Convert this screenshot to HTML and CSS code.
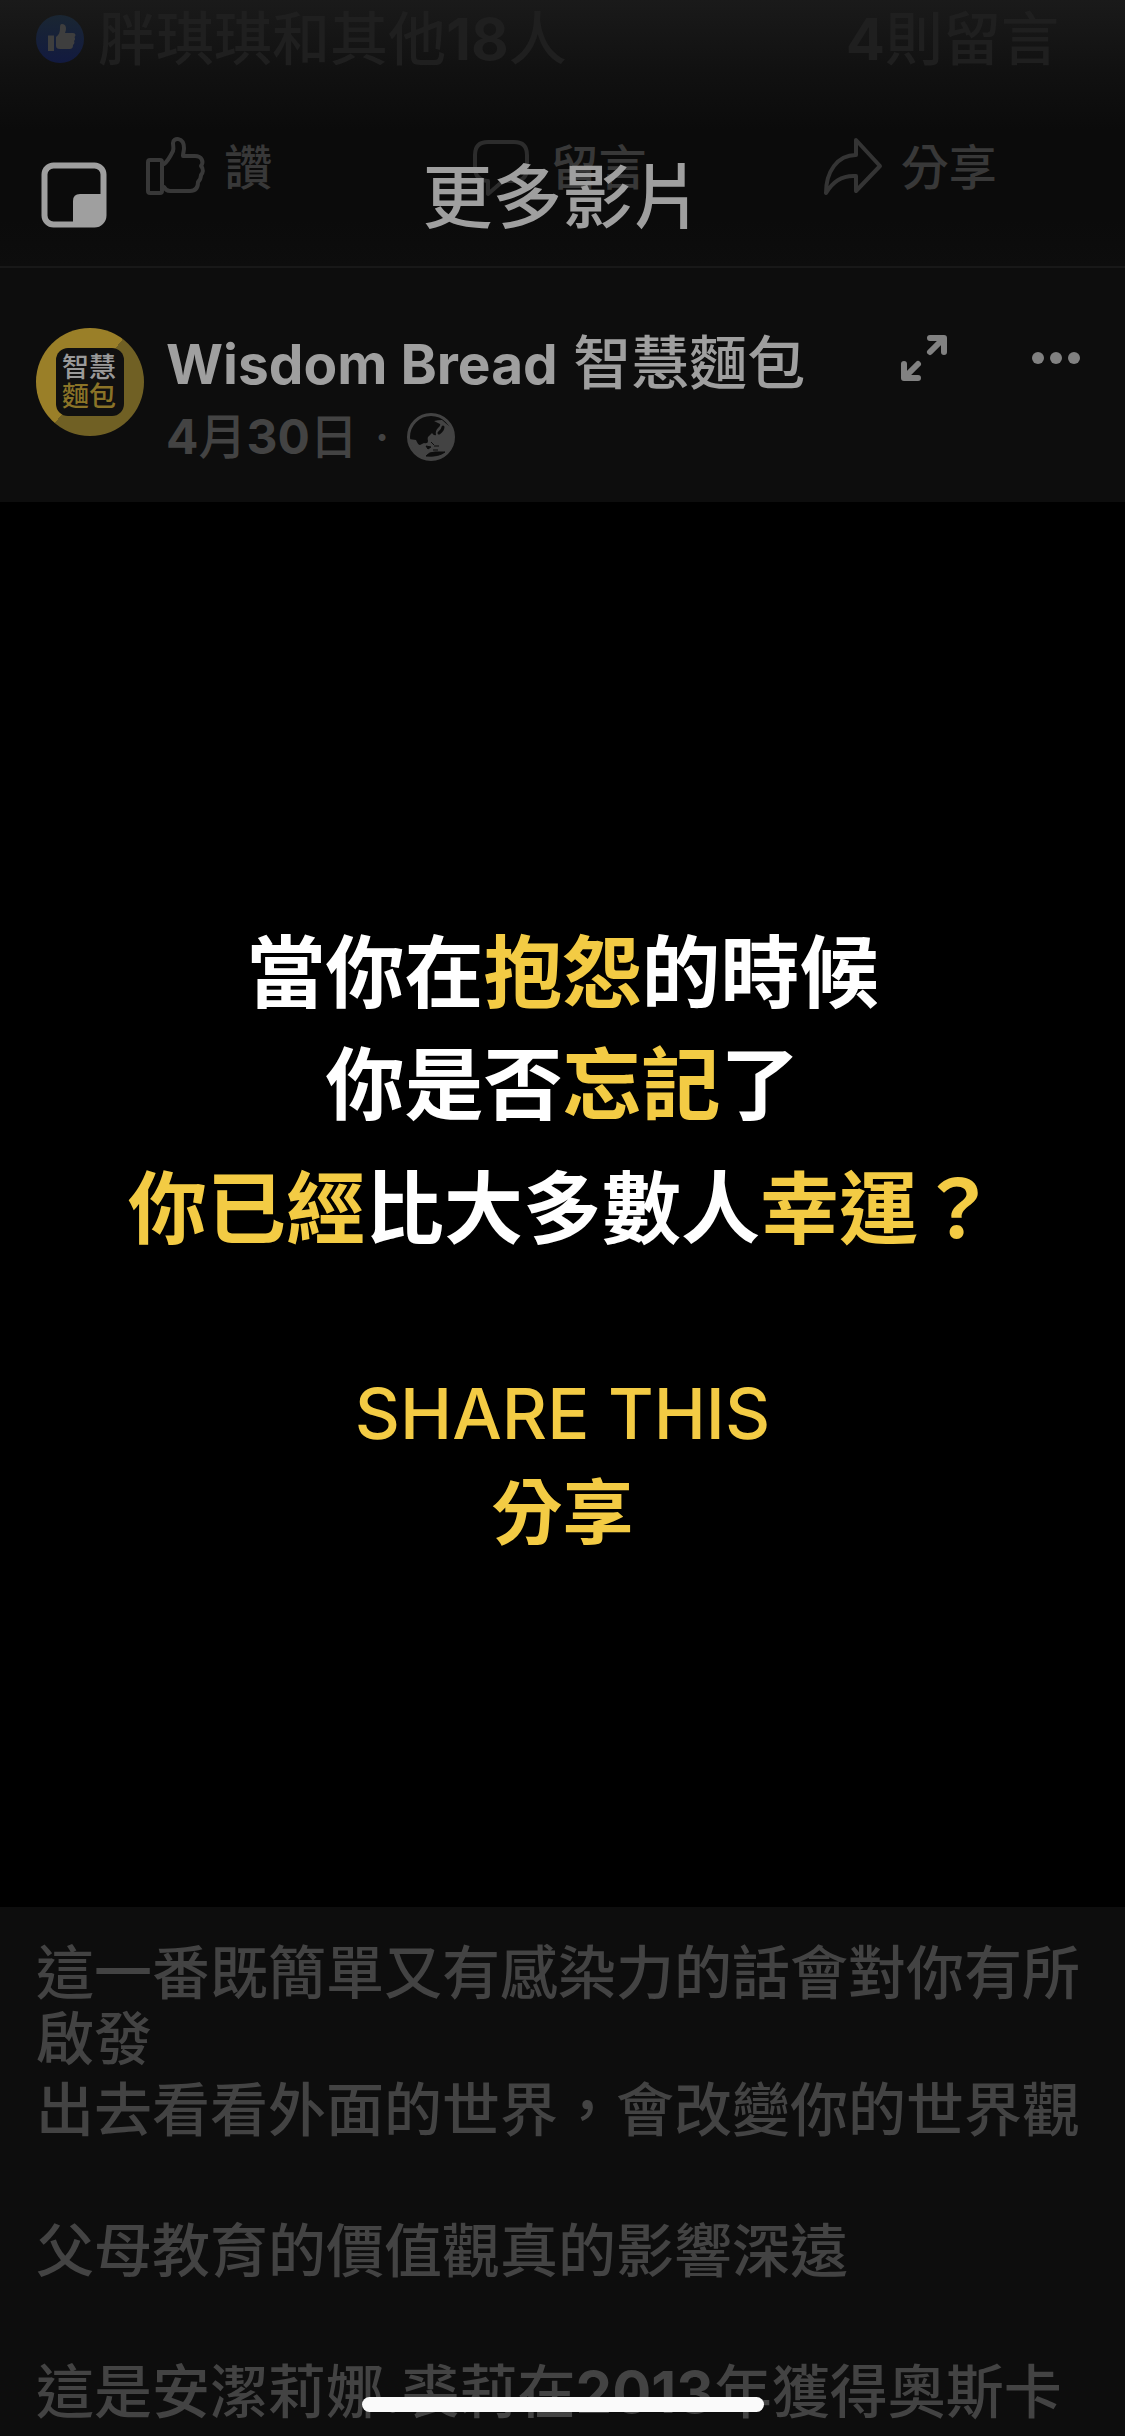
FILE: index.html
```html
<!DOCTYPE html>
<html lang="zh-Hant">
<head>
<meta charset="utf-8">
<meta name="viewport" content="width=device-width, initial-scale=1">
<title>更多影片</title>
<link rel="stylesheet" href="styles.css">
</head>
<body>
<header class="topbar">
  <button class="icon-button pip" aria-label="子母畫面">
    <svg width="66" height="66" viewBox="0 0 66 66" fill="none">
      <rect x="3.5" y="3.5" width="59" height="59" rx="9" stroke="#9f9f9f" stroke-width="6"/>
      <path d="M32 62V39q0-7 7-7h24v22q0 9-9 9z" fill="#9f9f9f"/>
    </svg>
  </button>
  <h1 class="topbar-title">更多影片</h1>
</header>

<main class="feed">
  <section class="previous-post">
    <div class="reactions">
      <svg class="like-badge" width="48" height="48" viewBox="0 0 48 48">
        <defs>
          <linearGradient id="like" x1="0" y1="0" x2="0" y2="1">
            <stop offset="0" stop-color="#1a2632"/>
            <stop offset="1" stop-color="#121a40"/>
          </linearGradient>
        </defs>
        <circle cx="24" cy="24" r="24" fill="url(#like)"/>
        <path d="M12 20.500h6V36h-6zM20 22c3-2 4-5 4-9 0-2 0-4 2-4 4 0 5 4 3 9h8c3 0 3 3 1.500 4 1 2 .5 3-.5 4 1 2 0 3-1 4 0 3-1 4-4 4H24q-4 0-4-3z" fill="#3e3e3e"/>
      </svg>
      <span class="reaction-names">胖琪琪和其他<b>18</b>人</span>
      <a class="comment-count" href="#comments"><b>4</b>則留言</a>
    </div>
    <div class="actions">
      <button class="action">
        <svg width="60" height="64" viewBox="0 0 60 64" fill="none" stroke="#383838" stroke-width="4" stroke-linejoin="round" stroke-linecap="round">
          <rect x="2" y="24" width="14" height="33" rx="2"/>
          <path d="M18 28c3-2 7-9 9-13 1-3 0-5 0-8 0-6 11-6 11 5 0 3-1 5-1 8h12c7 0 9 6 6 10 3 3 2 7 0 9 0 4-1 5-3 7 0 6-3 9-8 9H24q-4 0-6-4"/>
        </svg>
        <span>讚</span>
      </button>
      <button class="action">
        <svg width="60" height="64" viewBox="0 0 60 64" fill="none" stroke="#2c2c2c" stroke-width="4" stroke-linejoin="round">
          <path d="M16 6h26q13 0 13 13v13q0 13-13 13H31L16 58V45Q3 44 3 32V19Q3 6 16 6z"/>
        </svg>
        <span>留言</span>
      </button>
      <button class="action">
        <svg width="60" height="64" viewBox="0 0 60 64" fill="none" stroke="#343434" stroke-width="4" stroke-linejoin="round">
          <path d="M33 4l24 26-24 25V40C20 39 10 45 3 57 3 36 14 19 33 19z"/>
        </svg>
        <span>分享</span>
      </button>
    </div>
  </section>

  <article class="post">
    <header class="post-header">
      <div class="avatar"><span class="avatar-mark">智慧<i>麵包</i></span></div>
      <div class="byline">
        <a class="author" href="#author"><b>Wisdom Bread</b> 智慧麵包</a>
        <div class="meta">
          <time datetime="04-30"><b>4</b>月<b>30</b>日</time>
          <span>·</span>
          <svg width="50" height="50" viewBox="0 0 50 50" aria-label="公開">
            <circle cx="25" cy="25" r="22.500" fill="none" stroke="#434343" stroke-width="3"/>
            <path d="M3 27l7 1q2 5 4 5l4-2q4 1 4-2-1-4 1-5l3-3q2 3 4 2-1-4 2-7 3-3 2-4l-6-3q4-1 8-1l8 7q5 8 4 13-2 13-13 18-12 4-21-2Q5 38 3 27z" fill="#434343"/>
            <path d="M37 15q0 3-4 6" fill="none" stroke="#0d0d0d" stroke-width="3" stroke-linecap="round"/>
            <path d="M20 44q3-4 9-4h10q-6 5-19 4zM20 34l5 1-3 2zM28 34h5M27 38h5M25 30l3 3" fill="#0d0d0d" stroke="#0d0d0d" stroke-width="1"/>
          </svg>
        </div>
      </div>
      <div class="post-tools">
        <button class="icon-button" aria-label="全螢幕">
          <svg width="48" height="48" viewBox="0 0 48 48" fill="none" stroke="#818181" stroke-width="6" stroke-linecap="round" stroke-linejoin="round">
            <path d="M30 4h14v14M43 5L30 18M4 30v14h14M5 43l13-13"/>
          </svg>
        </button>
        <button class="icon-button" aria-label="更多選項">
          <svg width="48" height="48" viewBox="0 0 48 48" fill="#818181">
            <circle cx="6" cy="24" r="6"/><circle cx="24" cy="24" r="6"/><circle cx="42" cy="24" r="6"/>
          </svg>
        </button>
      </div>
    </header>

    <div class="video">
      <p class="line">當你在<em>抱怨</em>的時候</p>
      <p class="line">你是否<em>忘記</em>了</p>
      <p class="line line-last"><em>你已經</em>比大多數人<em>幸運？</em></p>
      <p class="share-en">SHARE THIS</p>
      <p class="share-zh">分享</p>
    </div>

    <div class="caption">
      <p>這一番既簡單又有感染力的話會對你有所啟發</p>
      <p>出去看看外面的世界，會改變你的世界觀</p>
      <p class="stanza">父母教育的價值觀真的影響深遠</p>
      <p class="stanza">這是安潔莉娜.裘莉在<b>2013</b>年獲得奧斯卡</p>
    </div>
  </article>
</main>
<div class="home-indicator"></div>
</body>
</html>
```
FILE: styles.css
```css
* {
  box-sizing: border-box;
}

body {
  margin: 0;
  min-height: 100vh;
  background: #0d0d0d;
  color: #9f9f9f;
  font-family: Inter, "Noto Sans CJK TC", sans-serif;
  font-weight: 500;
  overflow-x: hidden;
}

h1,
p {
  margin: 0;
}

/* Latin letters and digits sit a step heavier than the Chinese text */
b {
  font-weight: 700;
}

a {
  color: inherit;
  text-decoration: none;
}

svg {
  display: block;
  flex: none;
}

button {
  padding: 0;
  border: 0;
  background: none;
  color: inherit;
  font: inherit;
}

/* Title bar floating over the feed */
.topbar {
  position: absolute;
  top: 150px;
  left: 0;
  right: 0;
  z-index: 2;
  display: grid;
  grid-template-columns: 66px 1fr 66px;
  align-items: center;
  padding: 0 41px;
}

.topbar-title {
  padding-top: 6px;
  text-align: center;
  font-size: 70px;
  line-height: 84px;
  font-weight: 500;
}

/* Tail of the post above */
.previous-post {
  height: 268px;
  border-bottom: 2px solid #181818;
  background: linear-gradient(#1a1a1a, #111 70px, #0b0b0b 130px, #0b0b0b 220px, #0d0d0d);
}

.reactions {
  display: flex;
  align-items: center;
  gap: 14px;
  height: 78px;
  padding: 0 66px 0 36px;
  color: #1f1f1f;
  font-size: 58px;
  line-height: 78px;
}

.comment-count {
  margin-left: auto;
}

.actions {
  display: grid;
  grid-template-columns: repeat(3, 1fr);
  margin-top: 52px;
  padding: 0 40px 0 34px;
  color: #383838;
  font-size: 48px;
  line-height: 76px;
}

.action {
  display: flex;
  align-items: center;
  justify-content: center;
  gap: 18px;
}

/* Post header */
.post-header {
  display: flex;
  align-items: flex-start;
  gap: 22px;
  height: 234px;
  padding: 60px 45px 0 36px;
}

.avatar {
  display: grid;
  place-items: center;
  flex: none;
  width: 108px;
  height: 108px;
  border-radius: 50%;
  background: linear-gradient(129deg, #9a7f28 49%, #706024 49%);
}

.avatar-mark {
  width: 68px;
  height: 68px;
  padding: 5px 6px;
  border-radius: 12px;
  background: #101010;
  color: #9a9a9a;
  font-size: 27px;
  line-height: 29px;
}

.avatar-mark i {
  font-style: normal;
  color: #8a7327;
}

.byline {
  flex: 1;
}

.author {
  display: block;
  font-size: 58px;
  line-height: 70px;
}

.author b {
  font-size: 55px;
}

.meta {
  display: flex;
  align-items: center;
  gap: 17px;
  color: #434343;
  font-size: 48px;
  line-height: 76px;
}

.post-tools {
  display: flex;
  gap: 84px;
  padding-top: 6px;
}

/* Video frame */
.video {
  padding: 415px 0 346px;
  background: #000;
  color: #fff;
  text-align: center;
  font-weight: 700;
}

.video em {
  font-style: normal;
}

.video em,
.share-en,
.share-zh {
  color: #f3cb44;
}

.line {
  font-size: 79px;
  line-height: 112px;
}

.line-last {
  margin-top: 12px;
}

.share-en {
  margin-top: 100px;
  font-size: 70px;
  line-height: 98px;
  font-weight: 500;
}

.share-zh {
  font-size: 71px;
  line-height: 98px;
}

/* Caption */
.caption {
  padding: 33px 32px 0 36px;
  color: #434343;
  font-size: 58px;
  line-height: 66px;
}

.caption p + p {
  margin-top: 5px;
}

.caption .stanza.stanza {
  margin-top: 75px;
}

.home-indicator {
  position: fixed;
  bottom: 24px;
  left: 50%;
  width: 402px;
  height: 15px;
  margin-left: -201px;
  border-radius: 8px;
  background: #fafafa;
}
```
